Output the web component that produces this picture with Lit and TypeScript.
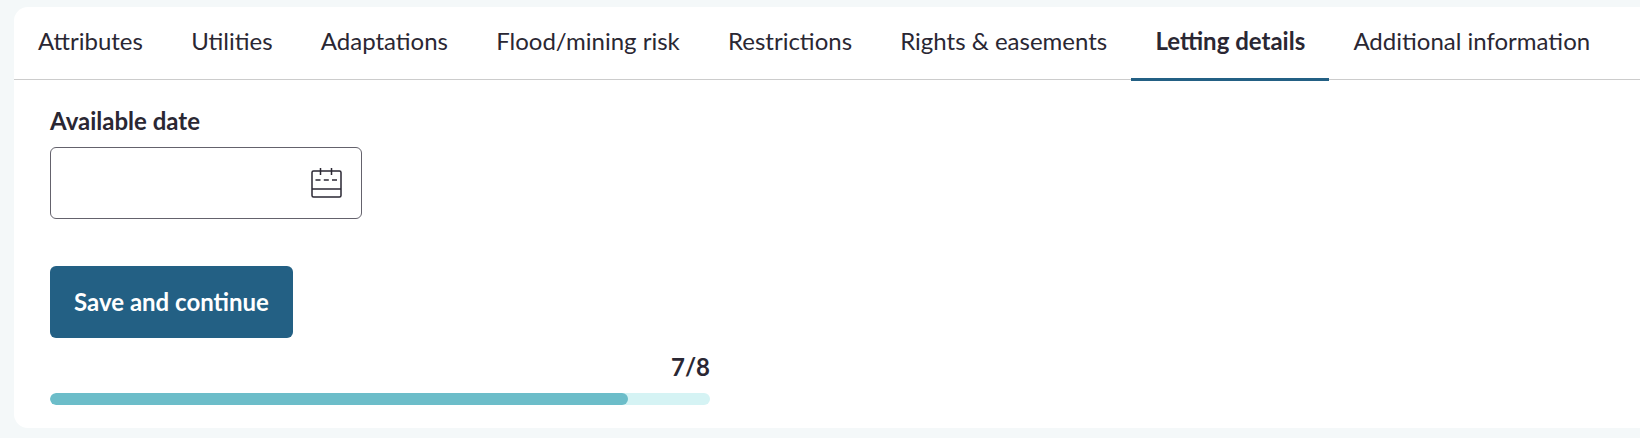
import { LitElement, html, css } from "lit";
import { customElement } from "lit/decorators.js";

const TABS = ["Attributes", "Utilities", "Adaptations", "Flood/mining risk", "Restrictions", "Rights & easements", "Letting details", "Additional information"];
const ACTIVE = 6;

@customElement("app-root")
export class AppRoot extends LitElement {
  static styles = css`
    :host { display: block; height: 438px; box-sizing: border-box; background: #f4f8f9; padding: 7px 0 10px 14px; font-family: Lato, "Liberation Sans", sans-serif; color: #2a2733; }
    .card { background: #fff; height: 421px; border-radius: 14px 0 0 14px; box-sizing: border-box; }
    .tabs { display: flex; height: 73px; border-bottom: 1px solid #cccccc; box-sizing: border-box; }
    .tab { display: flex; align-items: center; padding: 0 24.1px 5px; font-size: 24px; height: 74px; box-sizing: border-box; border-bottom: 3px solid transparent; white-space: nowrap; }
    .tab.active { font-weight: 700; border-bottom-color: #236084; }
    .body { padding: 27px 36px 0; }
    .label { font-size: 24px; font-weight: 700; line-height: 28px; }
    .input { margin-top: 12px; width: 312px; height: 72px; box-sizing: border-box; border: 1px solid #64626c; border-radius: 6px; display: flex; align-items: center; justify-content: flex-end; padding-right: 18px; }
    .input svg { display: block; }
    .btn { margin-top: 47px; width: 243px; height: 72px; background: #236084; color: #fff; border: 0; border-radius: 6px; font: 700 24px Lato, "Liberation Sans", sans-serif; padding: 0 0 2px; display: block; }
    .progress { width: 660px; margin-top: 15px; }
    .count { text-align: right; font-size: 24px; font-weight: 700; line-height: 28px; }
    .track { height: 12px; margin-top: 12px; background: #d5f3f4; border-radius: 6px; overflow: hidden; }
    .fill { height: 100%; background: #6cbdc9; border-radius: 6px; }
  `;

  render() {
    return html`
      <div class="card">
        <div class="tabs">
          ${TABS.map((t, i) => html`<div class="tab ${i === ACTIVE ? "active" : ""}">${t}</div>`)}
        </div>
        <div class="body">
          <div class="label">Available date</div>
          <div class="input">
            <svg width="32" height="32" viewBox="0 0 32 32" fill="none" stroke="#2a2733" stroke-width="1.5">
              <rect x="1" y="4" width="29" height="26" rx="1.5"/>
              <path d="M9.5 1v7M20.5 1v7M1 22h29"/>
              <path d="M4.5 13h5M12.8 13h5M21 13h5"/>
            </svg>
          </div>
          <button class="btn">Save and continue</button>
          <div class="progress">
            <div class="count">7/8</div>
            <div class="track"><div class="fill" style="width:${(7 / 8) * 100}%"></div></div>
          </div>
        </div>
      </div>
    `;
  }
}
